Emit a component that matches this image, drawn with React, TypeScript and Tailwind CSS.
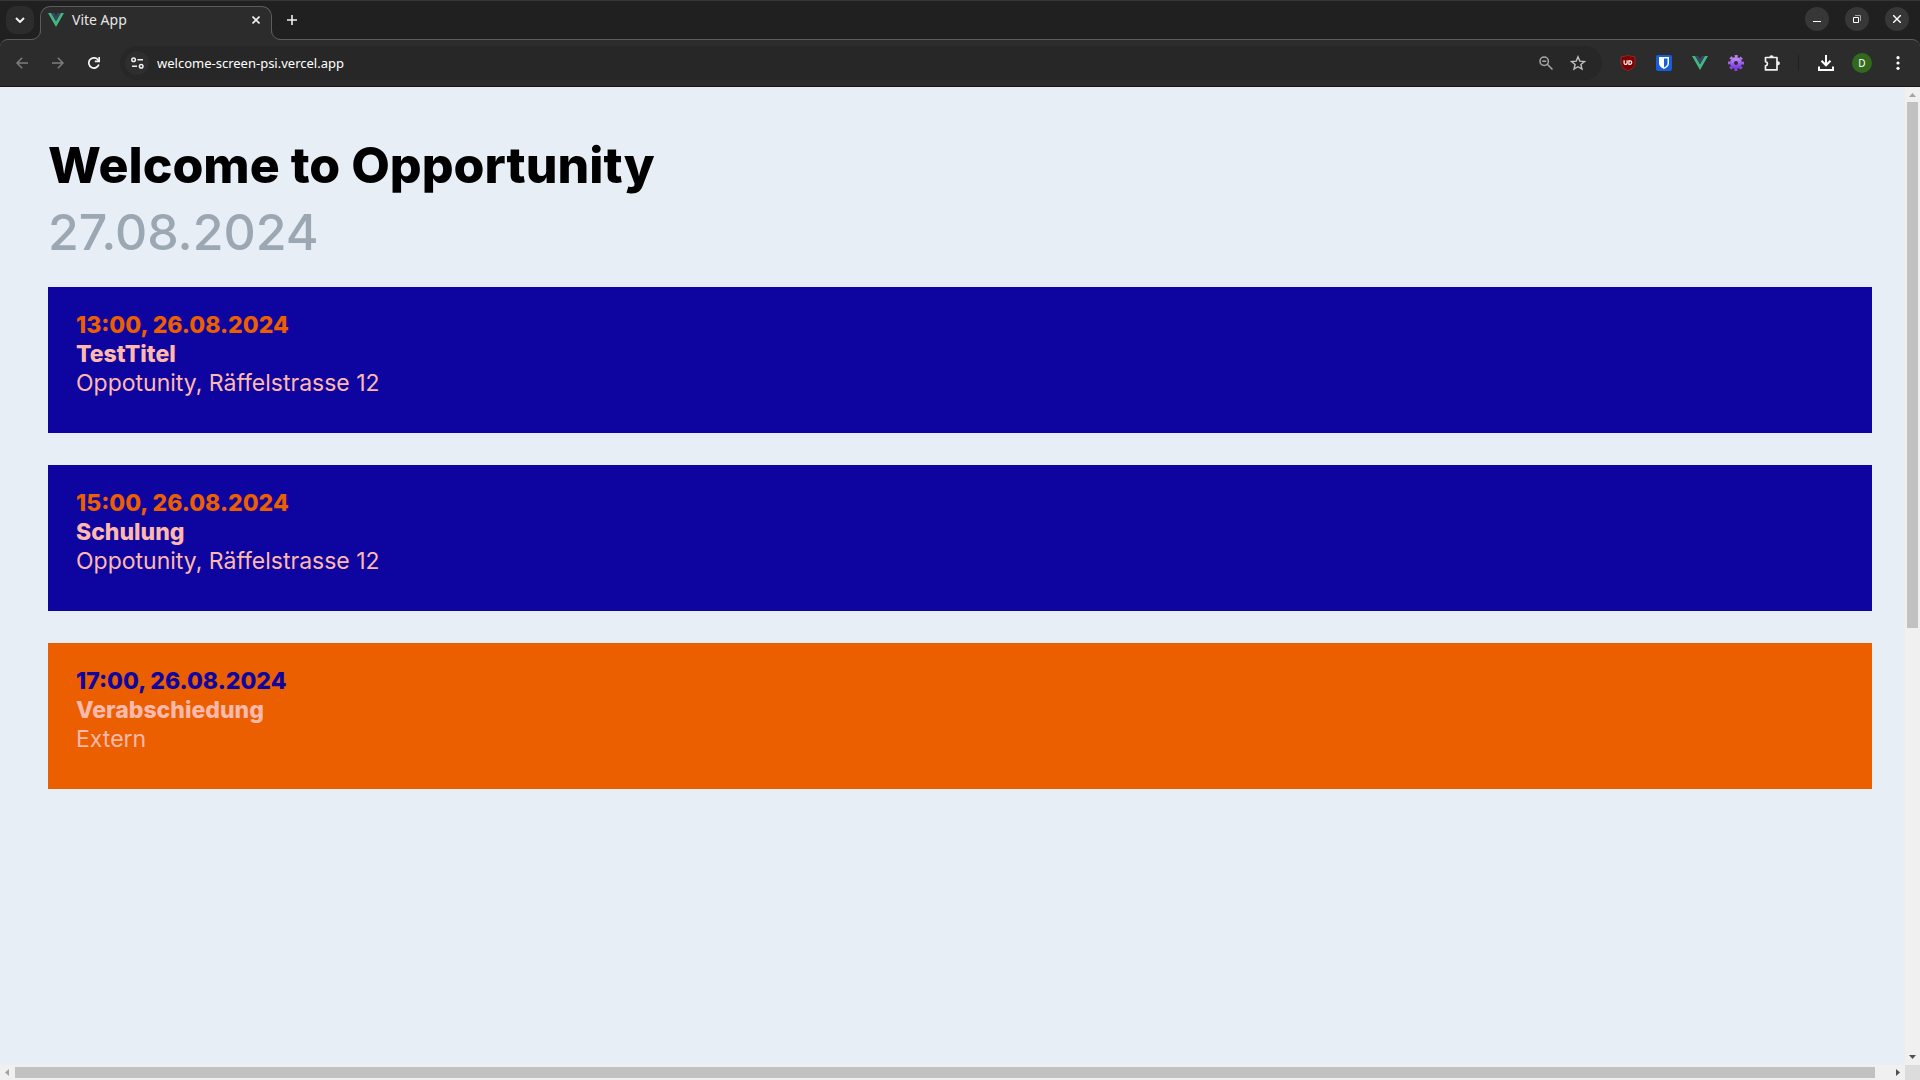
import React from "react";

type Event = { time: string; title: string; place: string; tone: "blue" | "orange" };

const events: Event[] = [
  { time: "13:00, 26.08.2024", title: "TestTitel", place: "Oppotunity, Räffelstrasse 12", tone: "blue" },
  { time: "15:00, 26.08.2024", title: "Schulung", place: "Oppotunity, Räffelstrasse 12", tone: "blue" },
  { time: "17:00, 26.08.2024", title: "Verabschiedung", place: "Extern", tone: "orange" },
];

function VueLogo() {
  return (
    <svg viewBox="0 0 16 14" className="h-[14px] w-4" aria-hidden="true">
      <path d="M0 0h3.2L8 8.3 12.8 0H16L8 14z" fill="#41b883" />
      <path d="M3.2 0h3L8 3.1 9.8 0h3L8 8.3z" fill="#35495e" />
    </svg>
  );
}

function IconButton({ label, className = "", children }: { label: string; className?: string; children: React.ReactNode }) {
  return (
    <button type="button" aria-label={label} className={`flex shrink-0 items-center justify-center ${className}`}>
      {children}
    </button>
  );
}

function TabStrip() {
  return (
    <div className="flex h-[39px] items-end border-t border-[#363636] bg-[#202020]">
      <div className="flex h-[38px] w-10 shrink-0 items-start pl-[6px] pt-[5px]">
        <IconButton label="Search tabs" className="h-7 w-7 rounded-[10px] bg-[#2c2c2c]">
          <svg viewBox="0 0 10 6" className="h-[6px] w-[10px]" fill="none" stroke="#f0f0f0" strokeWidth="2">
            <path d="M1 1l4 4 4-4" />
          </svg>
        </IconButton>
      </div>
      <div className="relative z-10 -mb-px flex h-[34px] w-[232px] shrink-0 items-start rounded-t-[10px] border border-b-0 border-[#5c5c5c] bg-[#2c2c2c] pl-[7px] pr-[9px] pt-[5px]">
        <svg viewBox="0 0 10 10" className="absolute -left-[10px] bottom-0 h-[10px] w-[10px]">
          <path d="M10 0A9.5 9.5 0 0 1 0 9.5V10h10z" fill="#2c2c2c" />
          <path d="M9.5 0A9 9 0 0 1 0 9.5" fill="none" stroke="#5c5c5c" />
        </svg>
        <svg viewBox="0 0 10 10" className="absolute -right-[10px] bottom-0 h-[10px] w-[10px]">
          <path d="M0 0A9.5 9.5 0 0 0 10 9.5V10H0z" fill="#2c2c2c" />
          <path d="M.5 0A9 9 0 0 0 10 9.5" fill="none" stroke="#5c5c5c" />
        </svg>
        <span className="mt-px"><VueLogo /></span>
        <span className="ml-2 flex-1 font-['Noto_Sans'] text-[14px] leading-4 text-[#e6e6e6]">Vite App</span>
        <IconButton label="Close tab" className="h-4 w-3">
          <svg viewBox="0 0 8 8" className="h-2 w-2" stroke="#f0f0f0" strokeWidth="1.6">
            <path d="M.5.5l7 7M7.5.5l-7 7" />
          </svg>
        </IconButton>
      </div>
      <div className="flex h-[38px] flex-1 items-start justify-between pl-[10px] pr-[11px] pt-[5px]">
        <IconButton label="New tab" className="h-7 w-5">
          <svg viewBox="0 0 10 10" className="h-[10px] w-[10px]" stroke="#f0f0f0" strokeWidth="1.6">
            <path d="M5 0v10M0 5h10" />
          </svg>
        </IconButton>
        <div className="flex gap-4 pt-px">
          <IconButton label="Minimize" className="h-6 w-6 rounded-full bg-[#373737]">
            <svg viewBox="0 0 8 8" className="h-2 w-2" stroke="#fff"><path d="M0 6.5h8" /></svg>
          </IconButton>
          <IconButton label="Restore" className="h-6 w-6 rounded-full bg-[#373737]">
            <svg viewBox="0 0 8 8" className="h-2 w-2" fill="none">
              <path d="M2 .5h5.5V6" stroke="#a0a0a0" />
              <path d="M.5 2.5h5v5h-5z" stroke="#fff" />
            </svg>
          </IconButton>
          <IconButton label="Close window" className="h-6 w-6 rounded-full bg-[#373737]">
            <svg viewBox="0 0 8 8" className="h-2 w-2" stroke="#fff" strokeWidth="1.4"><path d="M0 0l8 8M8 0L0 8" /></svg>
          </IconButton>
        </div>
      </div>
    </div>
  );
}

function Toolbar() {
  return (
    <div className="bg-[#202020]">
      <div className="flex h-12 items-center rounded-t-lg border-t border-b border-t-[#5c5c5c] border-b-[#171717] bg-[#2c2c2c] px-3">
        <IconButton label="Back" className="h-5 w-5">
          <svg viewBox="0 0 12 12" className="h-3 w-3" fill="none" stroke="#7d7d7d" strokeWidth="1.5"><path d="M12 6H1M6.2.8L1 6l5.2 5.2" /></svg>
        </IconButton>
        <IconButton label="Forward" className="ml-4 h-5 w-5">
          <svg viewBox="0 0 12 12" className="h-3 w-3" fill="none" stroke="#7d7d7d" strokeWidth="1.5"><path d="M0 6h11M5.8.8L11 6l-5.2 5.2" /></svg>
        </IconButton>
        <IconButton label="Reload" className="ml-4 h-5 w-5">
          <svg viewBox="0 0 12 12" className="h-3 w-3" fill="none" stroke="#f4f4f4" strokeWidth="1.7">
            <path d="M10.8 7.4A5.1 5.1 0 1 1 9.7 2.5L11 3.9" />
            <path d="M11.2 0v4.4H6.8" />
          </svg>
        </IconButton>
        <div className="ml-4 flex h-[34px] min-w-0 flex-1 items-center rounded-full bg-[#272727] pl-[5px] pr-[14px]">
          <IconButton label="View site information" className="h-6 w-6 rounded-full bg-[#2e2e2e]">
            <svg viewBox="0 0 13 12" className="h-3 w-[13px]" fill="none" stroke="#f0f0f0" strokeWidth="1.5">
              <circle cx="2.6" cy="2.7" r="1.8" />
              <path d="M6.5 2.7h5.5M1 9.3h5" />
              <circle cx="10.2" cy="9.3" r="1.8" />
            </svg>
          </IconButton>
          <input
            type="text"
            aria-label="Address"
            defaultValue="welcome-screen-psi.vercel.app"
            className="ml-2 min-w-0 flex-1 bg-transparent font-['Noto_Sans'] text-[13px] leading-5 text-white outline-none"
          />
          <IconButton label="Zoom" className="h-5 w-5">
            <svg viewBox="0 0 14 14" className="h-[14px] w-[14px]" fill="none" stroke="#a8a8a8" strokeWidth="1.5">
              <circle cx="5.2" cy="5.2" r="4.2" /><path d="M3.2 5.2h4M8.3 8.3l5.2 5.2" />
            </svg>
          </IconButton>
          <IconButton label="Bookmark this tab" className="ml-3 h-5 w-5">
            <svg viewBox="0 0 16 16" className="h-4 w-4" fill="none" stroke="#c0c0c0" strokeWidth="1.4">
              <path d="M8 1.8l1.8 4.3 4.7.4-3.6 3 1.1 4.6L8 11.7l-4 2.4 1.1-4.6-3.6-3 4.7-.4z" />
            </svg>
          </IconButton>
        </div>
        <div className="ml-4 flex items-center gap-4">
          <IconButton label="uBlock Origin" className="h-5 w-5">
            <svg viewBox="0 0 16 16" className="h-4 w-4">
              <path d="M8 0c2 1.2 4 1.6 7 1.8V8c0 4-3.5 6-7 8-3.500-2-7-4-7-8V1.800C4 1.600 6 1.200 8 0z" fill="#800000" stroke="#a44" strokeWidth=".5" />
              <path d="M4.100 5.300v2.600a1.500 1.500 0 0 0 3 0V5.300" fill="none" stroke="#fff" strokeWidth="1.200" />
              <path d="M8.900 5.900h1.200a1.700 1.700 0 0 1 0 3.400H8.900z" fill="none" stroke="#fff" strokeWidth="1.200" />
            </svg>
          </IconButton>
          <IconButton label="Bitwarden" className="h-5 w-5">
            <svg viewBox="0 0 16 16" className="h-4 w-4">
              <rect width="16" height="16" rx="2" fill="#175ddc" />
              <path d="M3 2h10v6.500c0 2.500-2.500 4.500-5 5.500-2.500-1-5-3-5-5.500z" fill="#fff" />
              <path d="M8 3.500h3.500v5c0 1.600-1.800 3-3.500 3.900z" fill="#175ddc" />
            </svg>
          </IconButton>
          <IconButton label="Vue.js devtools" className="h-5 w-5"><VueLogo /></IconButton>
          <IconButton label="Settings extension" className="h-5 w-5">
            <svg viewBox="0 0 16 16" className="h-4 w-4">
              <defs>
                <linearGradient id="gear" x1="0" y1="0" x2="0" y2="1">
                  <stop offset="0" stopColor="#bc86f5" /><stop offset="1" stopColor="#843ee8" />
                </linearGradient>
              </defs>
              <circle cx="8" cy="8" r="4" fill="none" stroke="url(#gear)" strokeWidth="4" />
              <circle cx="8" cy="8" r="6.900" fill="none" stroke="url(#gear)" strokeWidth="2.200" strokeDasharray="3 2.419" strokeDashoffset="1.500" />
            </svg>
          </IconButton>
          <IconButton label="Extensions" className="h-5 w-5">
            <svg viewBox="0 0 17 16" className="h-4 w-[17px]">
              <path d="M1.500 2.500h11.500v12.400H1.500v-4c2.600-.7 2.600-3.600 0-4.300z" fill="none" stroke="#f0f0f0" strokeWidth="1.700" strokeLinejoin="round" />
              <path d="M5.300 2.400a2.200 2.200 0 0 1 4.400 0zM13 6.200h.9a2 2 0 0 1 0 4H13z" fill="#f0f0f0" />
            </svg>
          </IconButton>
        </div>
        <span className="ml-4 mr-px h-4 w-px bg-[#1f1f1f]" />
        <IconButton label="Downloads" className="ml-4 h-5 w-5">
          <svg viewBox="0 0 16 16" className="h-4 w-4" fill="none" stroke="#fff" strokeWidth="2">
            <path d="M8 0v10M3.500 5.800L8 10.300l4.500-4.500M1 11.500V15h14v-3.500" />
          </svg>
        </IconButton>
        <button type="button" aria-label="Profile" className="ml-4 flex h-5 w-5 items-center justify-center rounded-full bg-[#33691e] font-['Noto_Sans'] text-[10px] leading-5 text-white">
          D
        </button>
        <IconButton label="Menu" className="ml-4 h-5 w-5">
          <svg viewBox="0 0 4 14" className="h-[14px] w-1" fill="#fff">
            <circle cx="2" cy="1.700" r="1.600" /><circle cx="2" cy="7" r="1.600" /><circle cx="2" cy="12.300" r="1.600" />
          </svg>
        </IconButton>
      </div>
    </div>
  );
}

function EventCard({ event }: { event: Event }) {
  const blue = event.tone === "blue";
  return (
    <article className={`px-7 pt-6 pb-[35px] text-[23px] leading-[29px] text-[#ffb9ac] ${blue ? "bg-[#0e04a0]" : "bg-[#eb5f00]"}`}>
      <p className={`font-extrabold ${blue ? "text-[#eb5f00]" : "text-[#0e04a0]"}`}>{event.time}</p>
      <h2 className="font-extrabold">{event.title}</h2>
      <p>{event.place}</p>
    </article>
  );
}

function VerticalScrollbar() {
  return (
    <div className="flex w-[15px] shrink-0 flex-col items-center bg-[#f0f0f0]" aria-hidden="true">
      <svg viewBox="0 0 15 15" className="h-[15px] w-[15px]"><path d="M4 10h7L7.500 6z" fill="#a3a3a3" /></svg>
      <div className="flex w-[11px] flex-1 flex-col">
        <div className="flex-[526] bg-[#c1c1c1]" />
        <div className="flex-[422]" />
      </div>
      <svg viewBox="0 0 15 15" className="h-[15px] w-[15px]"><path d="M4 5h7L7.500 9z" fill="#505050" /></svg>
    </div>
  );
}

function HorizontalScrollbar() {
  return (
    <div className="flex h-[15px] shrink-0 bg-[#f0f0f0]" aria-hidden="true">
      <svg viewBox="0 0 15 15" className="h-[15px] w-[15px]"><path d="M9 4v7L5 7.500z" fill="#a3a3a3" /></svg>
      <div className="flex flex-1 py-[2px]">
        <div className="flex-[1860] bg-[#c1c1c1]" />
        <div className="flex-[15]" />
      </div>
      <svg viewBox="0 0 15 15" className="h-[15px] w-[15px]"><path d="M6 4v7l4-3.500z" fill="#505050" /></svg>
      <div className="w-[15px] bg-[#dcdcdc]" />
    </div>
  );
}

export default function App() {
  return (
    <div className="flex h-screen flex-col overflow-hidden bg-[#e7eef5]">
      <header>
        <TabStrip />
        <Toolbar />
      </header>
      <div className="flex min-h-0 flex-1">
        <main className="min-w-0 flex-1 overflow-hidden pl-12 pr-[33px] pt-[45px] font-['Inter',sans-serif]">
          <h1 className="text-[50px] font-extrabold leading-[67px] text-black">Welcome to Opportunity</h1>
          <p className="text-[50px] font-medium leading-[67px] text-[#9ba8b3]">27.08.2024</p>
          <section className="mt-[21px] flex flex-col gap-8">
            {events.map((event) => (
              <EventCard key={event.time} event={event} />
            ))}
          </section>
        </main>
        <VerticalScrollbar />
      </div>
      <HorizontalScrollbar />
    </div>
  );
}
